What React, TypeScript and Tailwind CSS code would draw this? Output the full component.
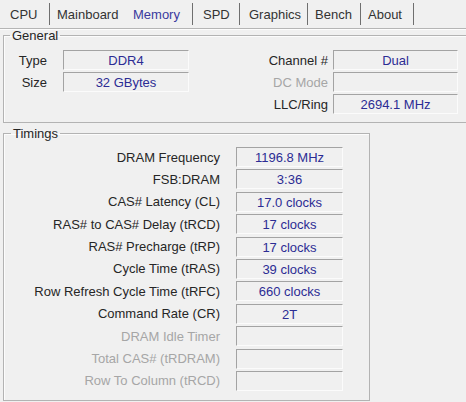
import React from "react";

const tabs = [
  { name: "CPU", w: "w-[50px] pl-[10px] border-r" },
  { name: "Mainboard", w: "w-[74px] pl-[7px]" },
  { name: "Memory", w: "w-[69px] pl-[9px] border-r", active: true },
  { name: "SPD", w: "w-[47px] pl-[10px] border-r" },
  { name: "Graphics", w: "w-[68px] pl-[9px] border-r" },
  { name: "Bench", w: "w-[53px] pl-[7px] border-r" },
  { name: "About", w: "w-[53px] pl-[7px] border-r" },
];

const timings: { label: string; value?: string; off?: boolean }[] = [
  { label: "DRAM Frequency", value: "1196.8 MHz" },
  { label: "FSB:DRAM", value: "3:36" },
  { label: "CAS# Latency (CL)", value: "17.0 clocks" },
  { label: "RAS# to CAS# Delay (tRCD)", value: "17 clocks" },
  { label: "RAS# Precharge (tRP)", value: "17 clocks" },
  { label: "Cycle Time (tRAS)", value: "39 clocks" },
  { label: "Row Refresh Cycle Time (tRFC)", value: "660 clocks" },
  { label: "Command Rate (CR)", value: "2T" },
  { label: "DRAM Idle Timer", off: true },
  { label: "Total CAS# (tRDRAM)", off: true },
  { label: "Row To Column (tRCD)", off: true },
];

function Field({ value, w }: { value?: string; w: string }) {
  return (
    <div
      className={`${w} h-[20px] border-t border-l border-t-[#a3a3a3] border-l-[#a3a3a3] border-b border-r border-b-[#fbfbfb] border-r-[#fbfbfb] text-center leading-[19px] text-[#2c2c94]`}
    >
      {value}
    </div>
  );
}

function Label({ text, w, off }: { text: string; w: string; off?: boolean }) {
  return (
    <div className={`${w} text-right whitespace-nowrap ${off ? "text-[#a6a6a6]" : "text-[#262626]"}`}>
      {text}
    </div>
  );
}

export default function App() {
  return (
    <div
      className="w-[466px] h-[402px] overflow-hidden bg-[#f0f0f0] text-[13px] leading-[15px] text-[#262626]"
      style={{ fontFamily: '"Liberation Sans", Arial, sans-serif' }}
    >
      {/* tab strip */}
      <div className="h-[29px] border-b border-[#b5b5b5] shadow-[0_1px_0_#fcfcfc] flex">
        {tabs.map((t) => (
          <div
            key={t.name}
            className={`${t.w} mt-[3px] h-[22px] leading-[24px] border-[#6f6f6f] ${
              t.active ? "text-[#3a3a9e]" : "text-[#333333]"
            }`}
          >
            {t.name}
          </div>
        ))}
      </div>

      {/* General */}
      <fieldset className="ml-[3px] w-[467px] border border-[#b3b3b3] shadow-[inset_1px_1px_0_#fcfcfc] pt-[8px] pb-[8px]">
        <legend className="ml-[6px] px-[2px] leading-[13px]">General</legend>
        <div className="flex">
          <div className="flex flex-col gap-[2px]">
            <div className="flex items-center gap-[16px]">
              <Label text="Type" w="w-[43px]" />
              <Field value="DDR4" w="w-[126px]" />
            </div>
            <div className="flex items-center gap-[16px]">
              <Label text="Size" w="w-[43px]" />
              <Field value="32 GBytes" w="w-[126px]" />
            </div>
          </div>
          <div className="ml-[39px] flex flex-col gap-[2px]">
            <div className="flex items-center gap-[5px]">
              <Label text="Channel #" w="w-[100px]" />
              <Field value="Dual" w="w-[125px]" />
            </div>
            <div className="flex items-center gap-[5px]">
              <Label text="DC Mode" w="w-[100px]" off />
              <Field w="w-[125px]" />
            </div>
            <div className="flex items-center gap-[5px]">
              <Label text="LLC/Ring" w="w-[100px]" />
              <Field value="2694.1 MHz" w="w-[125px]" />
            </div>
          </div>
        </div>
      </fieldset>

      {/* Timings */}
      <fieldset className="mt-[4px] ml-[3px] w-[367px] border border-[#b3b3b3] shadow-[inset_1px_1px_0_#fcfcfc] pt-[7px] pb-[9px]">
        <legend className="ml-[7px] px-[2px] leading-[13px]">Timings</legend>
        <div className="flex flex-col gap-[2.4px]">
          {timings.map((r) => (
            <div key={r.label} className="flex items-center gap-[16px]">
              <Label text={r.label} w="w-[216px]" off={r.off} />
              <Field value={r.value} w="w-[107px]" />
            </div>
          ))}
        </div>
      </fieldset>
    </div>
  );
}
